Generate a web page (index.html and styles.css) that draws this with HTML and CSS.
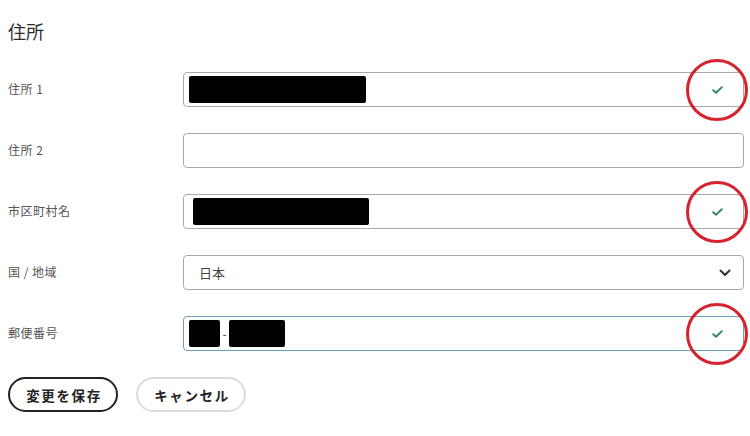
FILE: index.html
```html
<!DOCTYPE html>
<html lang="ja">
<head>
<meta charset="utf-8">
<link rel="stylesheet" href="styles.css">
</head>
<body>
<main class="page">
  <h2 class="title">住所</h2>
  <form class="form">
    <div class="row">
      <label class="label">住所 1</label>
      <div class="field">
        <span class="redact" style="width:177px"></span>
        <svg class="check" viewBox="0 0 11 8"><path d="M1.2 4.2 L4 6.8 L9.8 1.2" fill="none" stroke="#3a8c6b" stroke-width="2" stroke-linecap="round" stroke-linejoin="round"/></svg>
        <span class="ring"></span>
      </div>
    </div>
    <div class="row">
      <label class="label">住所 2</label>
      <div class="field"></div>
    </div>
    <div class="row">
      <label class="label">市区町村名</label>
      <div class="field field--wide">
        <span class="redact" style="width:176px"></span>
        <svg class="check" viewBox="0 0 11 8"><path d="M1.2 4.2 L4 6.8 L9.8 1.2" fill="none" stroke="#3a8c6b" stroke-width="2" stroke-linecap="round" stroke-linejoin="round"/></svg>
        <span class="ring"></span>
      </div>
    </div>
    <div class="row">
      <label class="label">国 / 地域</label>
      <div class="field field--select">
        <span class="value">日本</span>
        <svg class="chev" viewBox="0 0 12 8"><path d="M1.5 1.5 L6 6 L10.5 1.5" fill="none" stroke="#333" stroke-width="2" stroke-linecap="round" stroke-linejoin="round"/></svg>
      </div>
    </div>
    <div class="row">
      <label class="label">郵便番号</label>
      <div class="field field--focus">
        <span class="redact" style="width:31px"></span><span class="dash">-</span><span class="redact" style="width:56px"></span>
        <svg class="check" viewBox="0 0 11 8"><path d="M1.2 4.2 L4 6.8 L9.8 1.2" fill="none" stroke="#3a8c6b" stroke-width="2" stroke-linecap="round" stroke-linejoin="round"/></svg>
        <span class="ring"></span>
      </div>
    </div>
    <div class="actions">
      <button type="button" class="btn btn--primary">変更を保存</button>
      <button type="button" class="btn btn--secondary">キャンセル</button>
    </div>
  </form>
</main>
</body>
</html>
```
FILE: styles.css
```css
* { box-sizing: border-box; }
html, body { margin: 0; padding: 0; background: #fff; }
body {
  font-family: "Noto Sans CJK JP", "Noto Sans", "DejaVu Sans", sans-serif;
  color: #333;
  width: 750px;
  height: 436px;
  overflow: hidden;
}
.page {
  padding: 19px 0 0 8px;
}
.title {
  margin: 0;
  font-size: 18px;
  line-height: 24px;
  font-weight: 400;
  color: #2b2b2b;
}
.form {
  margin-top: 29px;
  display: flex;
  flex-direction: column;
  gap: 26px;
}
.row {
  display: grid;
  grid-template-columns: 175px 561px;
  align-items: center;
}
.label {
  font-size: 12px;
  color: #555;
  line-height: 16px;
  letter-spacing: 0.5px;
  margin-top: -2px;
}
.field {
  position: relative;
  height: 35px;
  border: 1px solid #a9a9a9;
  border-radius: 4px;
  display: flex;
  align-items: center;
  padding-left: 5px;
  background: #fff;
}
.field--wide { padding-left: 9px; }
.field--focus { border-color: #6c9fb3; }
.redact {
  display: inline-block;
  height: 27px;
  background: #000;
  border-radius: 2px;
}
.dash {
  font-size: 12px;
  color: #444;
  width: 9px;
  text-align: center;
}
.value {
  font-size: 13px;
  color: #444;
  padding-left: 10px;
}
.chev {
  position: absolute;
  right: 12px;
  top: 50%;
  width: 12px;
  height: 8px;
  margin-top: -4px;
}
.check {
  position: absolute;
  right: 20px;
  top: 50%;
  width: 11px;
  height: 8px;
  margin-top: -4px;
}
.ring {
  position: absolute;
  right: -5px;
  top: 50%;
  width: 62px;
  height: 62px;
  margin-top: -31px;
  border: 3px solid #d4242d;
  border-radius: 50%;
  pointer-events: none;
}
.actions {
  display: flex;
  gap: 18px;
}
.btn {
  height: 35px;
  width: 110px;
  border-radius: 18px;
  background: #fff;
  font-family: inherit;
  font-size: 13.5px;
  font-weight: 700;
  letter-spacing: 1.6px;
  color: #222;
  padding: 0 0 0 2px;
  cursor: pointer;
}
.btn--primary { border: 2px solid #222; }
.btn--secondary { border: 2px solid #dcdcdc; }
```
